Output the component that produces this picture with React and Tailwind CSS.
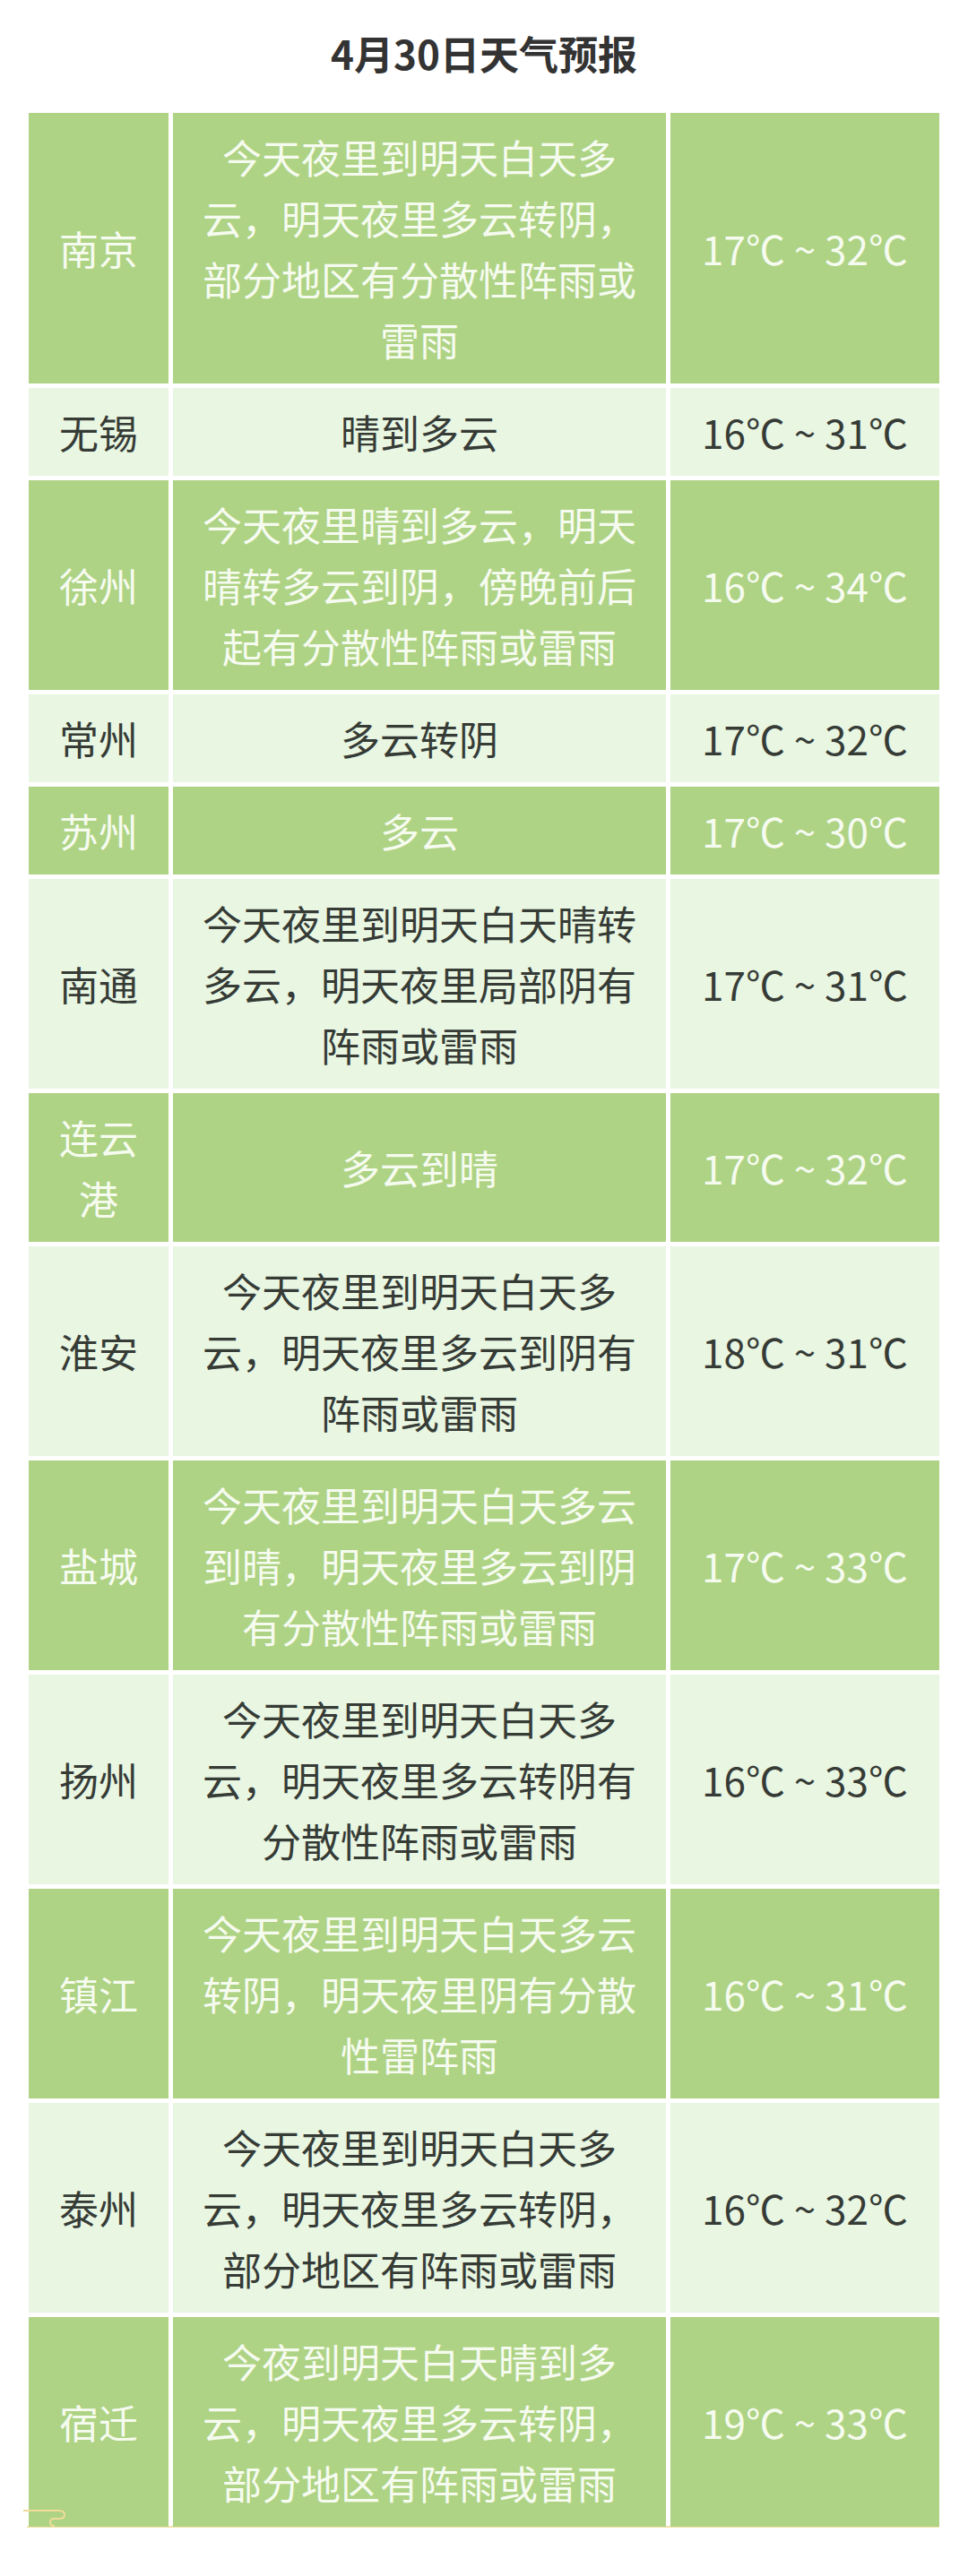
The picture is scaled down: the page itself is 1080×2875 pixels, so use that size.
const ROWS = [
  { city: ['南京'], desc: ['今天夜里到明天白天多', '云，明天夜里多云转阴，', '部分地区有分散性阵雨或', '雷雨'], temp: '17℃ ~ 32℃' },
  { city: ['无锡'], desc: ['晴到多云'], temp: '16℃ ~ 31℃' },
  { city: ['徐州'], desc: ['今天夜里晴到多云，明天', '晴转多云到阴，傍晚前后', '起有分散性阵雨或雷雨'], temp: '16℃ ~ 34℃' },
  { city: ['常州'], desc: ['多云转阴'], temp: '17℃ ~ 32℃' },
  { city: ['苏州'], desc: ['多云'], temp: '17℃ ~ 30℃' },
  { city: ['南通'], desc: ['今天夜里到明天白天晴转', '多云，明天夜里局部阴有', '阵雨或雷雨'], temp: '17℃ ~ 31℃' },
  { city: ['连云', '港'], desc: ['多云到晴'], temp: '17℃ ~ 32℃' },
  { city: ['淮安'], desc: ['今天夜里到明天白天多', '云，明天夜里多云到阴有', '阵雨或雷雨'], temp: '18℃ ~ 31℃' },
  { city: ['盐城'], desc: ['今天夜里到明天白天多云', '到晴，明天夜里多云到阴', '有分散性阵雨或雷雨'], temp: '17℃ ~ 33℃' },
  { city: ['扬州'], desc: ['今天夜里到明天白天多', '云，明天夜里多云转阴有', '分散性阵雨或雷雨'], temp: '16℃ ~ 33℃' },
  { city: ['镇江'], desc: ['今天夜里到明天白天多云', '转阴，明天夜里阴有分散', '性雷阵雨'], temp: '16℃ ~ 31℃' },
  { city: ['泰州'], desc: ['今天夜里到明天白天多', '云，明天夜里多云转阴，', '部分地区有阵雨或雷雨'], temp: '16℃ ~ 32℃' },
  { city: ['宿迁'], desc: ['今夜到明天白天晴到多', '云，明天夜里多云转阴，', '部分地区有阵雨或雷雨'], temp: '19℃ ~ 33℃' },
]

function Lines({ lines }) {
  return (
    <div>
      {lines.map((l) => (
        <div key={l} className="whitespace-nowrap">{l}</div>
      ))}
    </div>
  )
}

export default function App() {
  return (
    <div
      className="w-[1080px] min-h-[2875px] bg-white"
      style={{ fontFamily: '"Noto Sans CJK SC", "Noto Sans", sans-serif' }}
    >
      <div className="pt-[30px] text-center text-[44px] font-bold leading-[58px] text-[#333333]">
        4月30日天气预报
      </div>

      <div className="relative ml-[32px] mt-[38px] w-[1016px]">
        <div className="grid grid-cols-[156px_550px_300px] gap-x-[5px] gap-y-[5px]">
          {ROWS.map((r, i) => {
            const dark = i % 2 === 0
            const cell = dark
              ? 'bg-[#aed384] text-[#f6fbf0]'
              : 'bg-[#e8f6e2] text-[#363b36]'
            return [
              <div key={r.city[0] + 'c'} className={`${cell} flex items-center justify-center py-[15px] text-center text-[44px] leading-[68px]`}>
                <Lines lines={r.city} />
              </div>,
              <div key={r.city[0] + 'd'} className={`${cell} flex items-center justify-center py-[15px] text-center text-[44px] leading-[68px]`}>
                <Lines lines={r.desc} />
              </div>,
              <div key={r.city[0] + 't'} className={`${cell} flex items-center justify-center py-[15px] text-center text-[44px] leading-[68px]`}>
                <span className="whitespace-nowrap">{r.temp}</span>
              </div>,
            ]
          })}
        </div>

        <div className="h-[2px] w-[1018px] -ml-[2px] -mt-[1px] bg-[#f1e3a6]" />
        <svg className="absolute -left-[6px] bottom-0" width="56" height="22" viewBox="0 0 56 22" fill="none">
          <path
            d="M0 3 H40 Q46 3 46 8 Q46 12 40 12 H34 Q30 12 30 16 Q30 20 34 20"
            stroke="#f1dc98"
            strokeWidth="2"
            strokeLinecap="round"
          />
        </svg>
      </div>
    </div>
  )
}
